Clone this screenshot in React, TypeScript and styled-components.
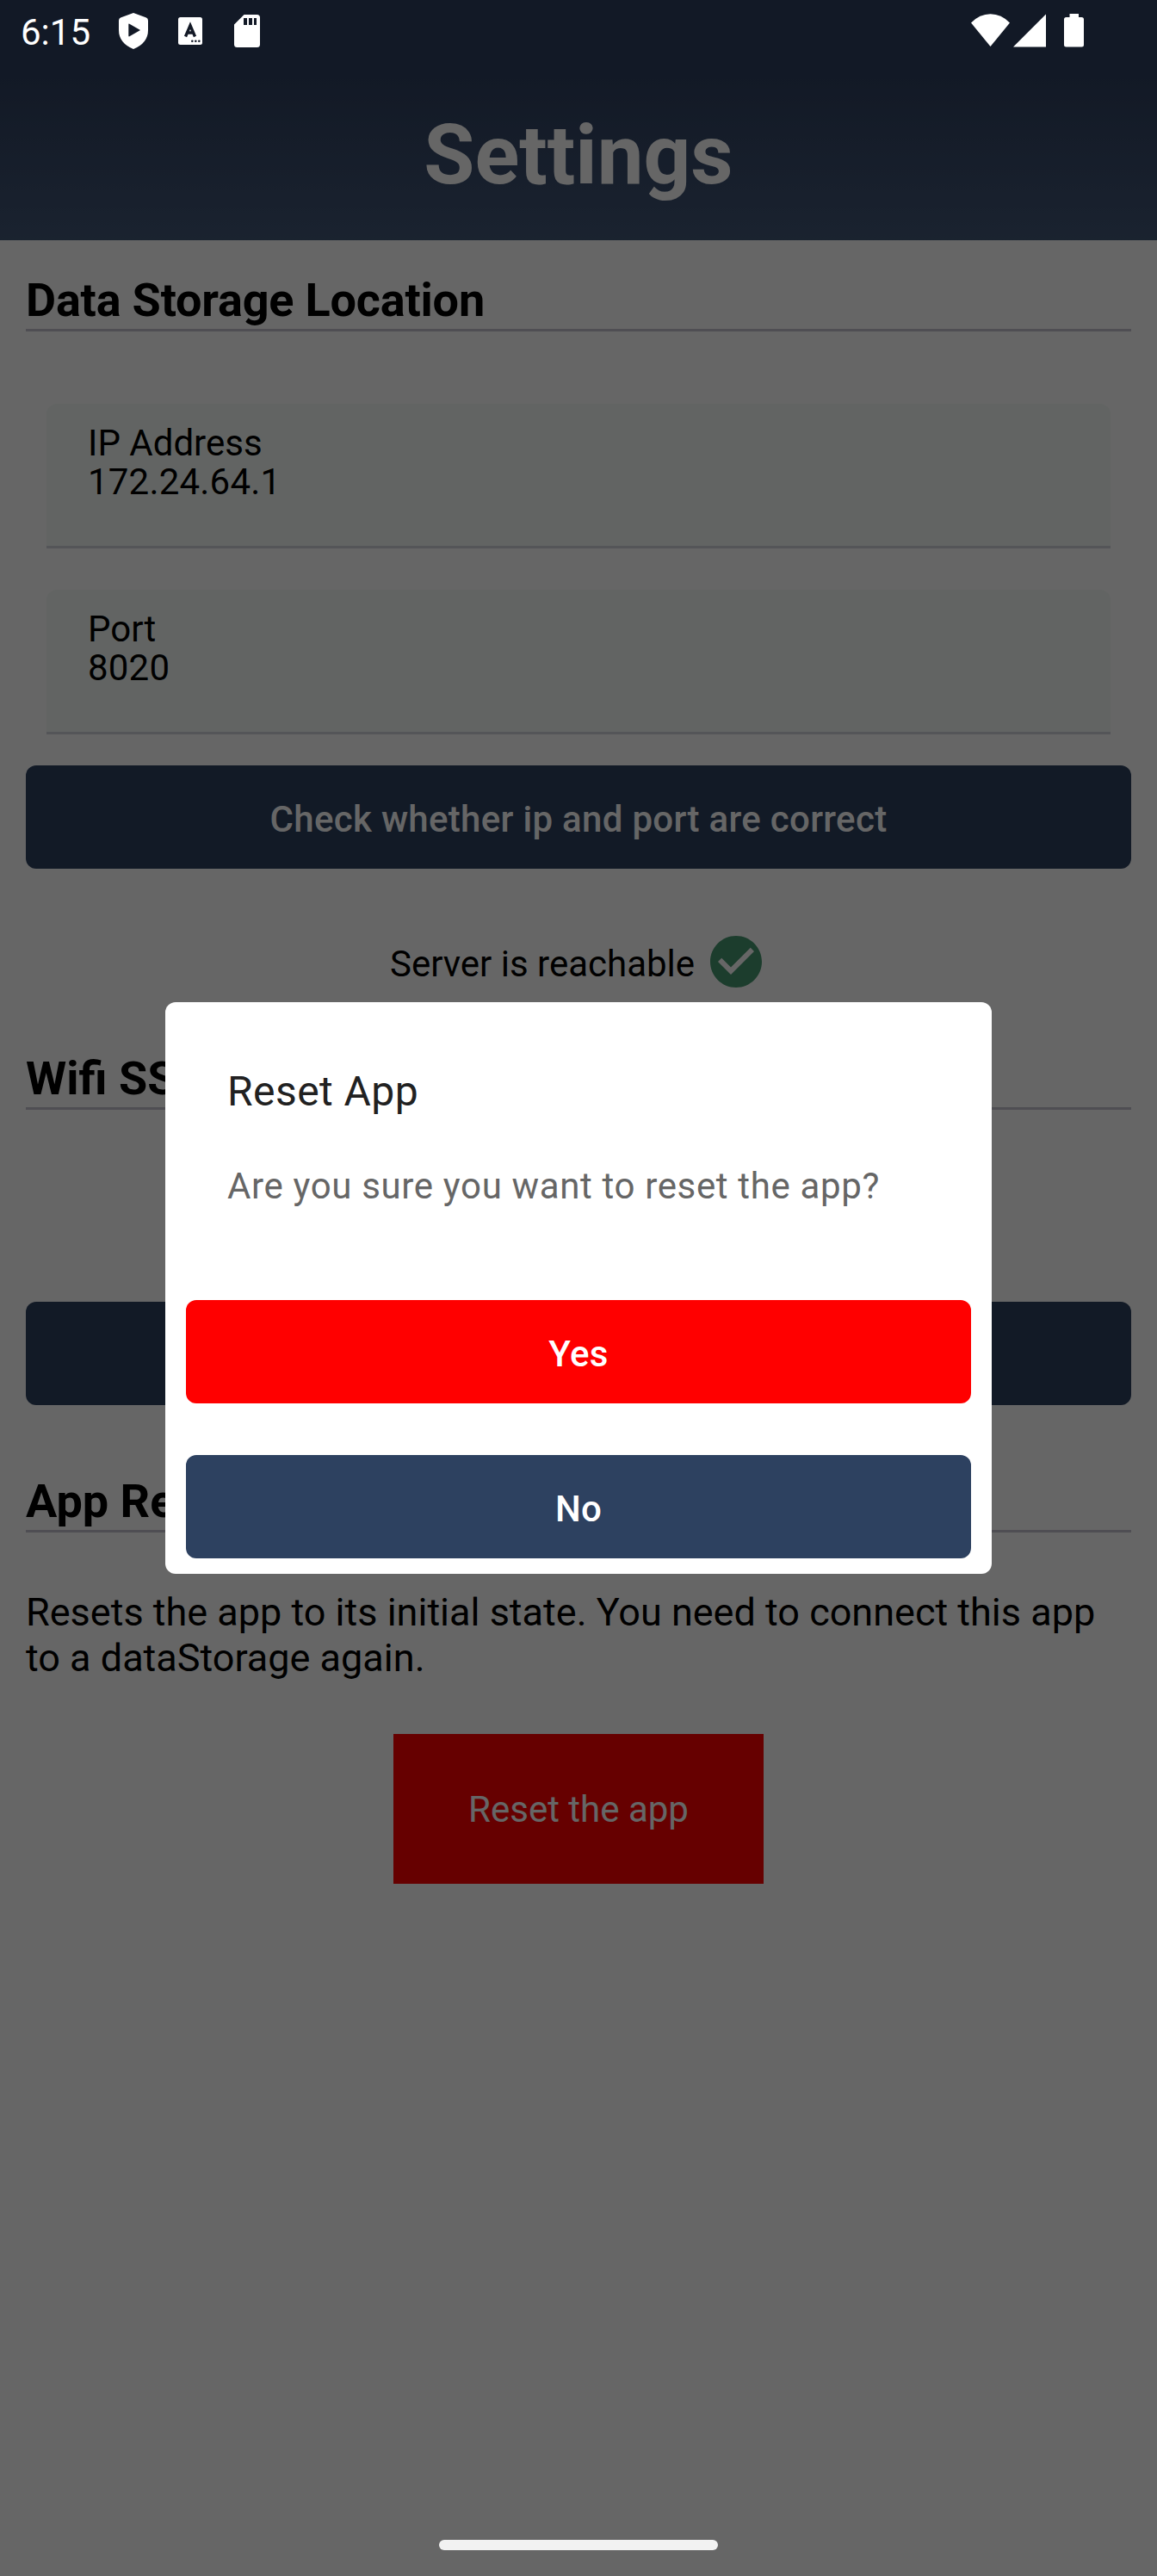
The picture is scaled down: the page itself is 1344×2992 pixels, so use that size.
import React from "react";
import styled, { createGlobalStyle } from "styled-components";

const GlobalStyle = createGlobalStyle`
  * { box-sizing: border-box; }
  body { margin: 0; background: #fff; font-family: Roboto, "Liberation Sans", sans-serif; }
  h1, h2, p { margin: 0; }
  button { border: 0; padding: 0; font-family: inherit; display: block; }
`;

const Screen = styled.div`
  position: relative;
  width: 1344px;
  height: 2992px;
  overflow: hidden;
  background: #fff;
  color: #000;
`;

const Header = styled.header`
  height: 279px;
  padding-top: 124px;
  text-align: center;
  background: linear-gradient(#2e3f5f 0, #2f405f 90px, #425777 100%);
`;

const Title = styled.h1`
  font-size: 96px;
  line-height: 112px;
  font-weight: 700;
  color: #fff;
`;

const Content = styled.main`
  display: flex;
  flex-direction: column;
  padding: 0 30px;
`;

const SectionTitle = styled.h2<{ $top: number; $spacing?: number }>`
  margin-top: ${(p) => p.$top}px;
  height: 69px;
  border-bottom: 3px solid #c6c3cf;
  font-size: 54px;
  line-height: 65px;
  font-weight: 700;
  letter-spacing: ${(p) => (p.$spacing ? `${p.$spacing}px` : "normal")};
`;

const Fields = styled.div`
  display: flex;
  flex-direction: column;
  gap: 48px;
  padding: 84px 24px 36px;
`;

const Field = styled.div`
  height: 168px;
  padding: 23px 48px 0;
  border-radius: 12px 12px 0 0;
  border-bottom: 3px solid #d2d4dc;
  background: #f4fbf7;
  font-size: 42px;
  line-height: 45px;
`;

const FieldLine = styled.div<{ $spacing: number }>`
  letter-spacing: ${(p) => p.$spacing}px;
`;

const ActionButton = styled.button<{ $danger?: boolean }>`
  width: 100%;
  height: 120px;
  padding-top: 5px;
  border-radius: 12px;
  background: ${(p) => (p.$danger ? "#ff0000" : "#2d4160")};
  color: #fff;
  font-size: 42px;
  line-height: 49px;
  font-weight: 500;
  letter-spacing: 0.3px;
`;

const ServerStatus = styled.div`
  display: flex;
  justify-content: center;
  align-items: center;
  gap: 12px;
  height: 72px;
  margin-top: 72px;
  font-size: 42px;
`;

const StatusText = styled.span`
  line-height: 49px;
  padding-top: 5px;
`;

const SsidGap = styled.div`
  height: 223px;
`;

const Description = styled.p`
  margin-top: 66px;
  font-size: 45px;
  line-height: 53px;
`;

const ResetButton = styled.button`
  align-self: center;
  width: 430px;
  height: 174px;
  margin-top: 62px;
  padding-top: 1px;
  background: #ff0000;
  color: #fff;
  font-size: 42px;
  line-height: 49px;
`;

const Scrim = styled.div`
  position: absolute;
  inset: 0;
  display: flex;
  justify-content: center;
  align-items: center;
  background: rgba(0, 0, 0, 0.6);
`;

const Dialog = styled.section`
  width: 960px;
  height: 664px;
  padding: 75px 24px 18px;
  border-radius: 12px;
  background: #fff;
`;

const DialogTitle = styled.h2`
  padding-left: 48px;
  font-size: 48px;
  line-height: 57px;
  font-weight: 400;
  color: #212121;
  letter-spacing: 0.45px;
`;

const DialogText = styled.p`
  margin: 57px 0 108px;
  padding-left: 48px;
  font-size: 42px;
  line-height: 49px;
  color: #666;
  letter-spacing: 0.65px;
`;

const DialogActions = styled.div`
  display: flex;
  flex-direction: column;
  gap: 60px;
`;

const StatusBar = styled.div`
  position: absolute;
  top: 0;
  left: 0;
  right: 0;
  height: 74px;
  display: flex;
  align-items: flex-start;
  justify-content: space-between;
  padding: 12px 84px 0 24px;
  color: #fff;
`;

const StatusGroup = styled.div`
  display: flex;
  align-items: flex-start;
`;

const Clock = styled.span`
  width: 112px;
  font-size: 42px;
  line-height: 51px;
`;

const NavHandle = styled.div`
  position: absolute;
  left: 510px;
  bottom: 30px;
  width: 324px;
  height: 12px;
  border-radius: 6px;
  background: #f2f2f2;
`;

const CheckCircle = () => (
  <svg width="72" height="72" viewBox="0 0 24 24" fill="#489870">
    <path d="M12 2C6.48 2 2 6.48 2 12s4.480 10 10 10 10-4.480 10-10S17.520 2 12 2zm-2 15l-5-5 1.410-1.410L10 14.170l7.590-7.590L19 8l-9 9z" />
  </svg>
);

const NotificationIcons = () => (
  <svg width="170" height="50" viewBox="136 12 170 50" fill="#fff">
    <path
      fillRule="evenodd"
      d="M155 15L170 20.500Q172 21.300 172 24V35Q172 50 155 57Q138 50 138 35V24Q138 21.300 140 20.500ZM149.300 28.400V41.600Q149.300 42.800 150.400 42.200L163 35L150.400 27.800Q149.300 27.200 149.300 28.400Z"
    />
    <rect x="207" y="20" width="28" height="32" rx="2.500" />
    <path d="M215.500 42.500L221 29.500L226.500 42.500M217.300 38H224.700" fill="none" stroke="#131926" strokeWidth="3.400" />
    <g fill="#131926">
      <circle cx="223.300" cy="47.700" r="1.300" />
      <circle cx="227.300" cy="47.700" r="1.300" />
      <circle cx="231.300" cy="47.700" r="1.300" />
    </g>
    <path
      fillRule="evenodd"
      d="M283.500 17H298.500Q302 17 302 20.500V51.500Q302 55 298.500 55H275.500Q272 55 272 51.500V28.500ZM283 21V29H287V21ZM289 21V29H293V21ZM295 21V29H298V21Z"
    />
  </svg>
);

const SystemIcons = () => (
  <svg width="134" height="44" viewBox="1127 12 134 44" fill="#fff">
    <path d="M1129 26.500Q1139 16.300 1151.500 16.300Q1164 16.300 1174 26.500L1151.500 54Z" />
    <path d="M1178 54.500L1216 16.500V54.500Z" />
    <path d="M1243.500 16H1254V20H1257.500Q1260 20 1260 22.500V52Q1260 54.500 1257.500 54.500H1239.500Q1237 54.500 1237 52V22.500Q1237 20 1239.500 20H1243.500Z" />
  </svg>
);

export default function App() {
  return (
    <Screen>
      <GlobalStyle />
      <Header>
        <Title>Settings</Title>
      </Header>
      <Content>
        <SectionTitle $top={37} $spacing={-0.2}>Data Storage Location</SectionTitle>
        <Fields>
          <Field>
            <FieldLine $spacing={0}>IP Address</FieldLine>
            <FieldLine $spacing={0.2}>172.24.64.1</FieldLine>
          </Field>
          <Field>
            <FieldLine $spacing={0}>Port</FieldLine>
            <FieldLine $spacing={0.2}>8020</FieldLine>
          </Field>
        </Fields>
        <ActionButton>Check whether ip and port are correct</ActionButton>
        <ServerStatus>
          <StatusText>Server is reachable</StatusText>
          <CheckCircle />
        </ServerStatus>
        <SectionTitle $top={67}>Wifi SSID</SectionTitle>
        <SsidGap />
        <ActionButton />
        <SectionTitle $top={79}>App Reset</SectionTitle>
        <Description>
          Resets the app to its initial state. You need to connect this app to a dataStorage again.
        </Description>
        <ResetButton>Reset the app</ResetButton>
      </Content>
      <Scrim>
        <Dialog role="dialog">
          <DialogTitle>Reset App</DialogTitle>
          <DialogText>Are you sure you want to reset the app?</DialogText>
          <DialogActions>
            <ActionButton $danger>Yes</ActionButton>
            <ActionButton>No</ActionButton>
          </DialogActions>
        </Dialog>
      </Scrim>
      <StatusBar>
        <StatusGroup>
          <Clock>6:15</Clock>
          <NotificationIcons />
        </StatusGroup>
        <SystemIcons />
      </StatusBar>
      <NavHandle />
    </Screen>
  );
}
